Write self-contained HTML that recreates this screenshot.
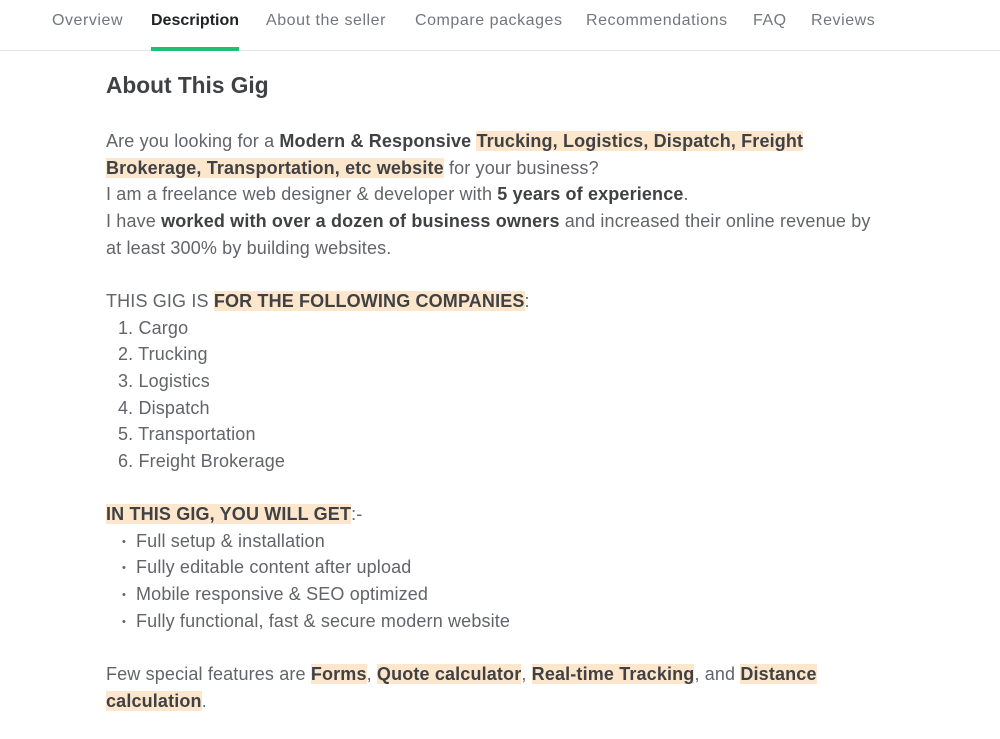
<!DOCTYPE html>
<html><head><style>
body{margin:0;width:1000px;height:739px;background:#fff;font-family:"Liberation Sans",sans-serif;overflow:hidden;position:relative}
.tab{position:absolute;top:12px;font-size:16px;color:#74767e;white-space:nowrap;letter-spacing:0.55px}
.tab.a{color:#222325;font-weight:bold;letter-spacing:0}
.bar{position:absolute;left:0;top:50px;width:1000px;height:1px;background:#e4e5e7}
.ul{position:absolute;left:151px;top:47px;width:88px;height:4px;background:#1dbf73}
h2{position:absolute;left:106px;top:72px;margin:0;font-size:22.7px;color:#404145;font-weight:bold}
.t{position:absolute;left:106px;top:128px;font-size:18px;letter-spacing:0.15px;line-height:26.65px;color:#62646a;white-space:nowrap}
.t div{height:26.65px;line-height:26.65px}
b{color:#404145}
.h{background:#fde7cc}
.i{padding-left:12px}
.d{padding-left:16px}
.d:before{content:"•";font-size:11px;margin-right:10px;vertical-align:2px;line-height:0}
</style></head><body>
<div class="tab" style="left:52px">Overview</div>
<div class="tab a" style="left:151px">Description</div>
<div class="tab" style="left:266px">About the seller</div>
<div class="tab" style="left:415px">Compare packages</div>
<div class="tab" style="left:586px">Recommendations</div>
<div class="tab" style="left:753px">FAQ</div>
<div class="tab" style="left:811px">Reviews</div>
<div class="bar"></div><div class="ul"></div>
<h2>About This Gig</h2>
<div class="t">
Are you looking for a <b>Modern &amp; Responsive</b> <b class="h">Trucking, Logistics, Dispatch, Freight</b><br>
<b class="h">Brokerage, Transportation, etc website</b> for your business?<br>
I am a freelance web designer &amp; developer with <b>5 years of experience</b>.<br>
I have <b>worked with over a dozen of business owners</b> and increased their online revenue by<br>
at least 300% by building websites.<br><br>
THIS GIG IS <b class="h">FOR THE FOLLOWING COMPANIES</b>:<br>
<div class="i">1. Cargo</div>
<div class="i">2. Trucking</div>
<div class="i">3. Logistics</div>
<div class="i">4. Dispatch</div>
<div class="i">5. Transportation</div>
<div class="i">6. Freight Brokerage</div>
<br>
<b class="h">IN THIS GIG, YOU WILL GET</b>:-<br>
<div class="d">Full setup &amp; installation</div>
<div class="d">Fully editable content after upload</div>
<div class="d">Mobile responsive &amp; SEO optimized</div>
<div class="d">Fully functional, fast &amp; secure modern website</div>
<br>
Few special features are <b class="h">Forms</b>, <b class="h">Quote calculator</b>, <b class="h">Real-time Tracking</b>, and <b class="h">Distance</b><br>
<b class="h">calculation</b>.
</div>
</body></html>
